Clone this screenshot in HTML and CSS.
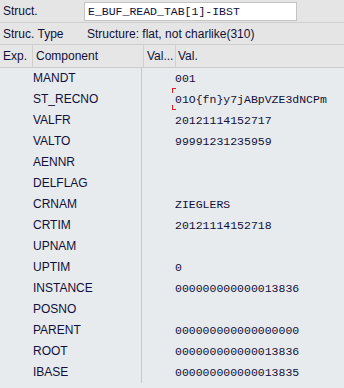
FILE: index.html
```html
<!DOCTYPE html>
<html lang="en">
<head>
    <meta charset="UTF-8">
    <title>Structure Display</title>
    <link rel="stylesheet" href="styles.css">
</head>
<body>
    <div class="info">
        <div class="info-row">
            <span class="info-label">Struct.</span>
            <span class="info-input">E_BUF_READ_TAB[1]-IBST</span>
        </div>
        <div class="info-row">
            <span class="info-label">Struc. Type</span>
            <span class="info-value">Structure: flat, not charlike(310)</span>
        </div>
    </div>

    <div class="grid">
        <div class="head">
            <span class="h-exp">Exp.</span>
            <span class="h-comp">Component</span>
            <span class="h-short">Val...</span>
            <span class="h-val">Val.</span>
        </div>

        <div class="row"><span class="comp">MANDT</span><span class="val">001</span></div>
        <div class="row"><span class="comp">ST_RECNO</span><span class="val cursor">01O{fn}y7jABpVZE3dNCPm<i class="mark top"></i><i class="mark bottom"></i></span></div>
        <div class="row"><span class="comp">VALFR</span><span class="val">20121114152717</span></div>
        <div class="row"><span class="comp">VALTO</span><span class="val">99991231235959</span></div>
        <div class="row"><span class="comp">AENNR</span><span class="val"></span></div>
        <div class="row"><span class="comp">DELFLAG</span><span class="val"></span></div>
        <div class="row"><span class="comp">CRNAM</span><span class="val">ZIEGLERS</span></div>
        <div class="row"><span class="comp">CRTIM</span><span class="val">20121114152718</span></div>
        <div class="row"><span class="comp">UPNAM</span><span class="val"></span></div>
        <div class="row"><span class="comp">UPTIM</span><span class="val">0</span></div>
        <div class="row"><span class="comp">INSTANCE</span><span class="val">000000000000013836</span></div>
        <div class="row"><span class="comp">POSNO</span><span class="val"></span></div>
        <div class="row"><span class="comp">PARENT</span><span class="val">000000000000000000</span></div>
        <div class="row"><span class="comp">ROOT</span><span class="val">000000000000013836</span></div>
        <div class="row"><span class="comp">IBASE</span><span class="val">000000000000013835</span></div>
    </div>
</body>
</html>
```

FILE: styles.css
```css
body {
    margin: 0;
    font-family: "Liberation Sans", Arial, sans-serif;
    font-size: 12px;
    color: #10103a;
    background-color: #e8ebee;
    width: 344px;
    height: 388px;
    overflow: hidden;
}

.info {
    background-color: #e5e5e5;
}

.info-row {
    display: flex;
    align-items: center;
    height: 22px;
    border-bottom: 1px solid #cfcfcf;
}

.info-row + .info-row {
    height: 21px;
}

.info-label {
    width: 81px;
    padding-left: 3px;
}

.info-input {
    width: 208px;
    height: 17px;
    margin-top: 1px;
    padding-left: 3px;
    background-color: white;
    border: 1px solid #c4c4c4;
    font-family: "Liberation Mono", "Courier New", monospace;
    font-size: 11.5px;
    line-height: 17px;
}

.info-value {
    padding-left: 3px;
}

.head {
    display: grid;
    grid-template-columns: 32px 111px 32px 1fr;
    height: 22px;
    background-color: #e6e6e6;
    border-bottom: 1px solid #cccccc;
}

.head span {
    display: flex;
    align-items: center;
    padding-left: 3px;
    border-left: 1px solid #cfcfcf;
}

.head .h-exp {
    border-left: none;
}

.head .h-val {
    padding-left: 2px;
}

.row {
    display: grid;
    grid-template-columns: 142px 1fr;
    height: 21px;
}

.comp {
    padding-left: 33px;
    line-height: 21px;
    border-right: 1px solid #c8c8c8;
}

.val {
    display: block;
    margin-left: 33px;
    line-height: 21px;
    font-family: "Liberation Mono", "Courier New", monospace;
    font-size: 11.5px;
}

.cursor {
    position: relative;
}

.mark {
    position: absolute;
    left: -3px;
    width: 3px;
    height: 4px;
    border-left: 1px solid #e02020;
}

.mark.top {
    top: -1px;
    border-top: 1px solid #e02020;
}

.mark.bottom {
    bottom: 0;
    border-bottom: 1px solid #e02020;
}
```
